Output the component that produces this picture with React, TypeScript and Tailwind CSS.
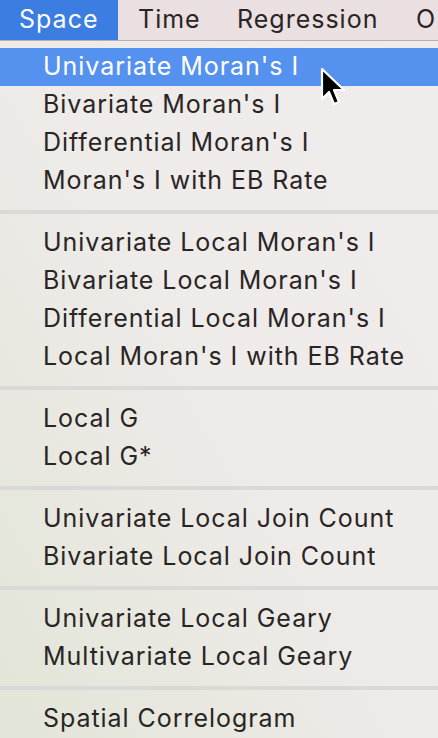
import React from "react";

const groups: string[][] = [
  ["Univariate Moran's I", "Bivariate Moran's I", "Differential Moran's I", "Moran's I with EB Rate"],
  ["Univariate Local Moran's I", "Bivariate Local Moran's I", "Differential Local Moran's I", "Local Moran's I with EB Rate"],
  ["Local G", "Local G*"],
  ["Univariate Local Join Count", "Bivariate Local Join Count"],
  ["Univariate Local Geary", "Multivariate Local Geary"],
  ["Spatial Correlogram"],
];

function Cursor() {
  return (
    <svg className="absolute left-[318px] top-[66px]" width="30" height="42" viewBox="0 0 30 42">
      <path
        d="M4 3 L4 33 L11 26 L16 38 L21 36 L16 24 L26 24 Z"
        fill="#000"
        stroke="#fff"
        strokeWidth="2.2"
        strokeLinejoin="round"
      />
    </svg>
  );
}

export default function App() {
  return (
    <div
      className="relative w-[438px] h-[738px] overflow-hidden bg-gradient-to-tr from-[#e2e5d7] via-[#eeebe9] to-[#f0ecec] text-[#2a2525]"
      style={{ fontFamily: "Inter, 'Noto Sans', sans-serif" }}
    >
      <div className="flex h-[40px] bg-[#eadfe1] text-[25px] tracking-[1px] items-stretch">
        <div className="flex items-center w-[118px] pl-[19px] bg-[#3b7de0] text-white">Space</div>
        <div className="flex items-center w-[119px] pl-[20px]">Time</div>
        <div className="flex items-center w-[179px]">Regression</div>
        <div className="flex items-center">O</div>
      </div>
      <div className="h-px bg-[#b4afb0]" />
      <div className="pt-[7px]">
        {groups.map((g, gi) => (
          <div key={gi}>
            {gi > 0 && <div className="h-[4px] bg-[#dcd8d8] my-[10px]" />}
            {g.map((t, i) => (
              <div
                key={t}
                className={
                  "h-[38px] flex items-center pl-[43px] text-[25px] tracking-[0.95px] " +
                  (gi === 0 && i === 0 ? "bg-[#5592f0] text-white" : "")
                }
              >
                {t}
              </div>
            ))}
          </div>
        ))}
      </div>
      <Cursor />
    </div>
  );
}
